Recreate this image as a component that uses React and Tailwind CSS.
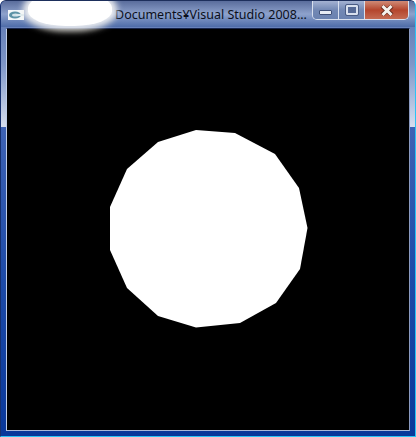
import React from "react";

function Blob() {
  return (
    <div className="absolute left-[27px] top-[-8px] w-[84px] h-[33px] rounded-[45%] bg-white shadow-[0_0_6px_5px_rgba(255,255,255,0.85),0_2px_5px_4px_rgba(120,110,80,0.18)]" />
  );
}

function AppIcon() {
  return (
    <svg width="16" height="10" viewBox="0 0 16 10" className="shrink-0">
      <rect width="16" height="10" fill="#f4f8fa" />
      <ellipse cx="7" cy="5" rx="6" ry="3.6" fill="#5d93a6" />
      <ellipse cx="7.5" cy="5" rx="3.5" ry="1.6" fill="#d4e4ea" />
      <rect x="8" y="4" width="8" height="2" fill="#dbe9ee" />
    </svg>
  );
}

function Minimize() {
  return <span className="block w-[13px] h-[5px] mt-[9px] bg-[#e6ebf4] border border-[#3f5078] rounded-[1px]" />;
}

function Maximize() {
  return <span className="block w-[12px] h-[10px] mt-[4px] border-[2px] border-[#d8e0ee] outline outline-1 outline-[#4a5c84] rounded-[1px] bg-[#566a96]" />;
}

function Close() {
  return (
    <svg width="14" height="11" viewBox="0 0 14 11" className="mt-[4px]">
      <path d="M2 1 L12 10 M12 1 L2 10" stroke="#6a2c1e" strokeWidth="4.4" />
      <path d="M2.5 1 L11.5 10 M11.5 1 L2.5 10" stroke="#f4f2ee" strokeWidth="3" />
    </svg>
  );
}

export default function App() {
  return (
    <div
      className="relative w-[416px] h-[437px] overflow-hidden flex flex-col bg-[#0a3a96] border-r border-r-[#29c4f5] border-b border-b-[#29c4f5] border-l border-l-[#16306e] border-t border-t-[#1d2f5c] rounded-t-[6px]"
      style={{ fontFamily: '"Noto Sans", "Noto Sans CJK JP", sans-serif' }}
    >
      <div className="absolute inset-x-0 top-0 h-[126px] bg-gradient-to-b from-[#5672ae] via-[#7e96c8] to-[#d6deee]" />
      <div className="absolute inset-x-0 top-[126px] bottom-0 bg-gradient-to-b from-[#3d62b4] via-[#1c4aa8] to-[#08379a]" />

      <div className="relative z-10 h-[26px] flex items-start bg-gradient-to-b from-[#5a6d9c] via-[#8ea2cc] to-[#4e6ca8] shrink-0">
        <div className="ml-[7px] mt-[9px]"><AppIcon /></div>
        <Blob />
        <span className="ml-[91px] mt-[5px] text-[12.5px] leading-[18px] text-[#0b0f1a] whitespace-nowrap">Documents¥Visual Studio 2008...</span>
        <div className="absolute right-[6px] top-0 h-[19px] w-[97px] flex border border-t-0 border-[#d8e0ee] rounded-b-[5px] overflow-hidden">
          <div className="w-[26px] flex justify-center bg-gradient-to-b from-[#a4b2d2] via-[#7288b4] to-[#6a82b0] border-r border-[#d8e0ee]"><Minimize /></div>
          <div className="w-[26px] flex justify-center bg-gradient-to-b from-[#a4b2d2] via-[#7288b4] to-[#6a82b0] border-r border-[#d8e0ee]"><Maximize /></div>
          <div className="flex-1 flex justify-center bg-gradient-to-b from-[#cf8a76] via-[#b4452d] to-[#c46a52]"><Close /></div>
        </div>
      </div>

      <div className="relative flex-1 mt-[1px] mx-[5px] mb-[5px] border border-t-[#16244a] border-l-[#c0cee8] border-r-[#8a9ac0] border-b-[#a9b8d8] bg-black">
        <svg width="402" height="402" viewBox="0 0 402 402" className="absolute left-0 top-0">
          <polygon
            transform="translate(-7 -29)"
            fill="#ffffff"
            points="196,130 235,133 275,154 299,188 307.5,228 300,269 276,303 240,323 196,327.5 158,316 127,288 110,250 110,207 127,169 158,142"
          />
        </svg>
      </div>
    </div>
  );
}
